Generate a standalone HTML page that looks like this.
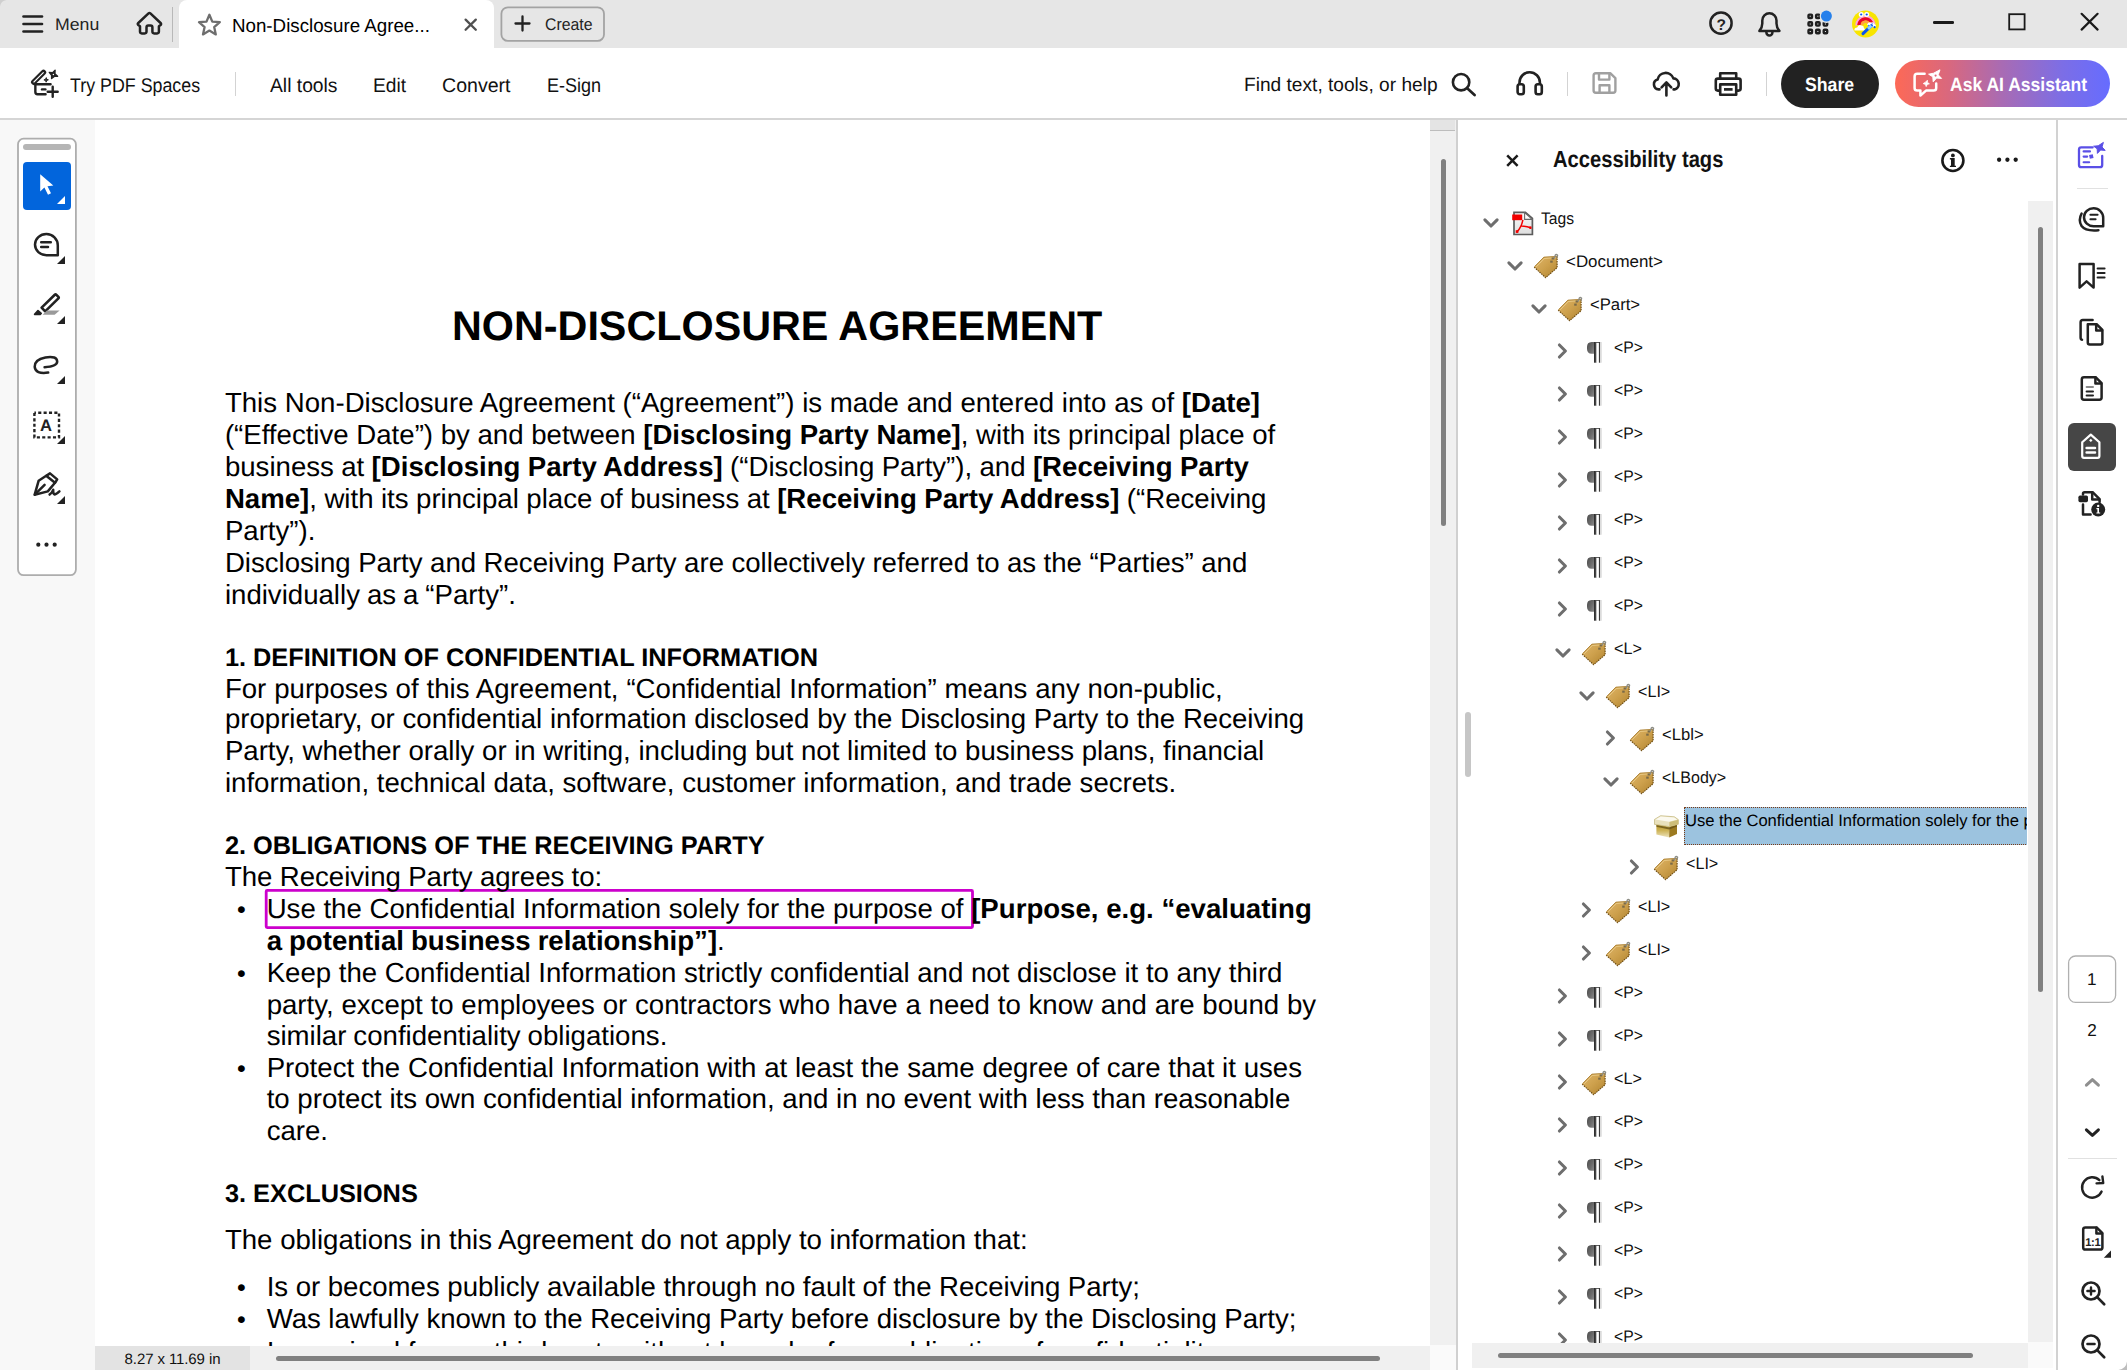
<!DOCTYPE html>
<html lang="en"><head><meta charset="utf-8"><title>Non-Disclosure Agreement</title>
<style>
html,body{margin:0;padding:0}
body{width:2127px;height:1370px;position:relative;overflow:hidden;background:#fff;font-family:'Liberation Sans',sans-serif}
.t{position:absolute;white-space:pre;font-family:'Liberation Sans',sans-serif;text-rendering:geometricPrecision}
.a{position:absolute}
svg{position:absolute;overflow:visible}

</style></head>
<body>
<div class="a" style="left:0;top:0;width:2127px;height:48px;background:#e6e6e6"></div><div class="a" style="left:0;top:48px;width:2127px;height:70px;background:#fff"></div><div class="a" style="left:0;top:118px;width:2127px;height:2px;background:#d5d5d5"></div><div class="a" style="left:0;top:120px;width:95px;height:1250px;background:#f8f8f8"></div><div class="a" style="left:1430px;top:120px;width:26px;height:1225px;background:#f0f0f0"></div><div class="a" style="left:1430px;top:120px;width:25px;height:10px;background:#e4e4e4;border-bottom:1px solid #bdbdbd"></div><div class="a" style="left:1441px;top:158.5px;width:5.2px;height:367px;background:#808080;border-radius:3px"></div><div class="a" style="left:1456px;top:120px;width:2px;height:1250px;background:#d0d0d0"></div><svg style="left:0;top:0" width="2127" height="1370"><rect x="266.2" y="890.4" width="706.3" height="37.2" fill="none" stroke="#cc00cc" stroke-width="2.8" rx="1"/></svg><svg style="left:22px;top:14px" width="24" height="20" viewBox="0 0 24 20" ><g stroke="#222" stroke-width="2.6" stroke-linecap="round"><line x1="1.5" y1="2.5" x2="20" y2="2.5"/><line x1="1.5" y1="10" x2="20" y2="10"/><line x1="1.5" y1="17.5" x2="20" y2="17.5"/></g></svg><svg style="left:136px;top:11px" width="28" height="26" viewBox="0 0 28 26" ><path d="M4 15.2 V20.6 Q4 22.4 5.8 22.4 H8.7 Q10.5 22.4 10.5 20.6 V16.4 Q10.5 14.6 12.3 14.6 H14.6 Q16.4 14.6 16.4 16.4 V20.6 Q16.4 22.4 18.2 22.4 H21.1 Q22.9 22.4 22.9 20.6 V15.2 L24.6 14 Q25.6 13 24.6 12 L14.4 2.4 Q13.45 1.6 12.5 2.4 L2.3 12 Q1.3 13 2.3 14 Z" fill="none" stroke="#222" stroke-width="2.5" stroke-linejoin="round"/></svg><div class="a" style="left:172px;top:7px;width:1px;height:35px;background:#b8b8b8"></div><div class="a" style="left:179px;top:0;width:315px;height:48px;background:#fff;border-radius:8px 8px 0 0"></div><svg style="left:196px;top:12px" width="27" height="27" viewBox="0 0 27 27" ><path d="M13.4 2.7 L16.3 9.6 L23.8 10.2 L18.2 15.1 L19.8 22.4 L13.4 18.6 L7.0 22.4 L8.6 15.1 L3.0 10.2 L10.5 9.6 Z" fill="none" stroke="#6e6e6e" stroke-width="2.3" stroke-linejoin="round"/></svg><svg style="left:463px;top:17px" width="16" height="16" viewBox="0 0 16 16" ><path d="M2.6 2.6 L12.8 12.8 M12.8 2.6 L2.6 12.8" stroke="#505050" stroke-width="2.3" stroke-linecap="round"/></svg><svg style="left:498px;top:4px" width="110" height="40" viewBox="0 0 110 40" ><rect x="3.4" y="3.3" width="102.6" height="33.6" rx="6.5" fill="#e6e6e6" stroke="#a3a3a3" stroke-width="1.8"/></svg><svg style="left:514px;top:15px" width="18" height="18" viewBox="0 0 18 18" ><path d="M8.5 1.5 V15.5 M1.5 8.5 H15.5" stroke="#222" stroke-width="2.3" stroke-linecap="round"/></svg><svg style="left:28px;top:66px" width="34" height="34" viewBox="0 0 34 34" ><g fill="none" stroke="#222" stroke-linecap="round" stroke-linejoin="round">
<path d="M5.7 16.2 L15.5 6.4" stroke-width="5.4"/><path d="M5.9 16 L15.3 6.6" stroke="#fff" stroke-width="1.1"/>
<path d="M6.6 18.3 H22.6 M7.35 18.6 V26.1 Q7.35 28.3 9.55 28.3 H17.6" stroke-width="2.4"/>
<path d="M14 23.4 H17.4" stroke-width="2.4"/>
<path d="M24.7 20.7 V30.7 M19.7 25.7 H29.7" stroke-width="2.4"/>
</g>
<path d="M27.1 4.3 L26.9 7.8 L29.6 10.2 L26.3 10.4 L23.6 12.5 L23.6 9.2 L21.3 6.4 L24.6 6.7 Z" fill="#222" stroke="#222" stroke-width="1.4" stroke-linejoin="round"/><circle cx="25.4" cy="8.5" r="0.75" fill="#fff"/>
<path d="M18.3 11.6 L18.7 13.2 L20.4 13.8 L18.8 14.5 L18.1 16.2 L17.6 14.5 L15.9 13.9 L17.5 13.2 Z" fill="#222" stroke="#222" stroke-width="0.9" stroke-linejoin="round"/></svg><div class="a" style="left:235px;top:72px;width:1px;height:24px;background:#d3d3d3"></div><svg style="left:1449px;top:69.3px" width="30" height="30" viewBox="0 0 30 30" ><circle cx="12.1" cy="13.2" r="8.2" fill="none" stroke="#222" stroke-width="2.6"/><path d="M18.2 19.3 L25.6 26" stroke="#222" stroke-width="2.7" stroke-linecap="round"/></svg><svg style="left:1514px;top:70px" width="32" height="30" viewBox="0 0 32 30" ><g fill="none" stroke="#222" stroke-width="2.6" stroke-linejoin="round"><path d="M5.5 14.5 V12.5 A10.2 10.2 0 0 1 25.9 12.5 V14.5"/><rect x="3.6" y="14.2" width="6.2" height="10" rx="2.2"/><rect x="21.6" y="14.2" width="6.2" height="10" rx="2.2"/></g></svg><div class="a" style="left:1567px;top:72px;width:1px;height:24px;background:#d3d3d3"></div><svg style="left:1590px;top:70px" width="30" height="28" viewBox="0 0 30 28" ><g fill="none" stroke="#a0a0a0" stroke-width="2.4" stroke-linejoin="round"><path d="M3.6 5.4 Q3.6 3.2 5.8 3.2 H20.2 L25.4 8.2 V20.6 Q25.4 22.8 23.2 22.8 H5.8 Q3.6 22.8 3.6 20.6 Z"/><path d="M9 3.4 V9.6 H19.4 V3.4"/><path d="M9.6 22.6 V15.2 H19.4 V22.6"/></g></svg><svg style="left:1650px;top:69px" width="34" height="30" viewBox="0 0 34 30" ><g fill="none" stroke="#222" stroke-width="2.6" stroke-linecap="round" stroke-linejoin="round"><path d="M9.5 20.4 H8.6 A5 5 0 0 1 7.6 10.6 A8.2 8.2 0 0 1 23.4 9.4 A5.6 5.6 0 0 1 24.6 20.4 H23.6"/><path d="M16.4 26.4 V13.8 M11.6 18.4 L16.4 13.4 L21.2 18.4"/></g></svg><svg style="left:1712px;top:69px" width="34" height="30" viewBox="0 0 34 30" ><g fill="none" stroke="#222" stroke-width="2.6" stroke-linejoin="round"><path d="M8.2 9.6 V4.2 H24.2 V9.6"/><path d="M8.2 21.6 H5.8 Q3.8 21.6 3.8 19.6 V11.6 Q3.8 9.6 5.8 9.6 H26.6 Q28.6 9.6 28.6 11.6 V19.6 Q28.6 21.6 26.6 21.6 H24.2"/><rect x="8.2" y="15.4" width="16" height="10.4"/><path d="M12 20.4 H20.6" stroke-width="2.7"/></g></svg><div class="a" style="left:1766px;top:72px;width:1px;height:24px;background:#d3d3d3"></div><div class="a" style="left:1781px;top:60px;width:98px;height:48px;border-radius:24px;background:#222"></div><div class="a" style="left:1895px;top:60px;width:215px;height:47px;border-radius:24px;background:linear-gradient(90deg,#fd6956 0%,#d9687e 25%,#a86bb4 50%,#7c6ee6 78%,#666cff 100%)"></div><svg style="left:1910px;top:68px" width="34" height="34" viewBox="0 0 34 34" ><g fill="none" stroke="#fff" stroke-width="2.5" stroke-linejoin="round" stroke-linecap="round"><path d="M14.6 5.8 H7.2 Q4.6 5.8 4.6 8.4 V20 Q4.6 22.6 7.2 22.6 H10.4 V27.6 L16 22.6 H23.6 Q26.2 22.6 26.2 20 V15.4"/></g><path d="M30 1.8 L28.2 6.8 L31.6 10.4 L26.6 10 L23.2 13.8 L22.8 8.8 L18.6 6.2 L23.6 5.2 Z" fill="#fff" stroke="#fff" stroke-width="1" stroke-linejoin="round"/><circle cx="25.6" cy="7.6" r="1.1" fill="#e2687c"/><path d="M17.4 12.2 L17.4 14.4 L19.4 15.8 L17.2 16.4 L16.2 18.6 L15.4 16.4 L13.2 15.6 L15.2 14.4 Z" fill="#fff" stroke="#fff" stroke-width="0.8" stroke-linejoin="round"/></svg><svg style="left:1708px;top:10px" width="26" height="26" viewBox="0 0 26 26" ><circle cx="13" cy="13.2" r="10.6" fill="none" stroke="#222" stroke-width="2.5"/></svg><svg style="left:1755px;top:9px" width="30" height="30" viewBox="0 0 30 30" ><g fill="none" stroke="#222" stroke-width="2.5" stroke-linejoin="round" stroke-linecap="round"><path d="M4.4 21.9 Q7.3 18.6 7.3 14.6 V11.4 A7.1 7.1 0 0 1 21.5 11.4 V14.6 Q21.5 18.6 24.4 21.9 Z"/><path d="M11.4 22.4 V23.4 A3 3 0 0 0 17.4 23.4 V22.4"/></g></svg><svg style="left:1806px;top:12.5px" width="26" height="26" viewBox="0 0 26 26" ><rect x="2.5" y="1.6" width="3.5" height="3.4" rx="0.8" fill="none" stroke="#1f1f1f" stroke-width="2.4" stroke-linejoin="round"/><rect x="10.1" y="1.6" width="3.5" height="3.4" rx="0.8" fill="none" stroke="#1f1f1f" stroke-width="2.4" stroke-linejoin="round"/><rect x="17.7" y="1.6" width="3.5" height="3.4" rx="0.8" fill="none" stroke="#1f1f1f" stroke-width="2.4" stroke-linejoin="round"/><rect x="2.5" y="9.2" width="3.5" height="3.4" rx="0.8" fill="none" stroke="#1f1f1f" stroke-width="2.4" stroke-linejoin="round"/><rect x="10.1" y="9.2" width="3.5" height="3.4" rx="0.8" fill="none" stroke="#1f1f1f" stroke-width="2.4" stroke-linejoin="round"/><rect x="17.7" y="9.2" width="3.5" height="3.4" rx="0.8" fill="none" stroke="#1f1f1f" stroke-width="2.4" stroke-linejoin="round"/><rect x="2.5" y="16.8" width="3.5" height="3.4" rx="0.8" fill="none" stroke="#1f1f1f" stroke-width="2.4" stroke-linejoin="round"/><rect x="10.1" y="16.8" width="3.5" height="3.4" rx="0.8" fill="none" stroke="#1f1f1f" stroke-width="2.4" stroke-linejoin="round"/><rect x="17.7" y="16.8" width="3.5" height="3.4" rx="0.8" fill="none" stroke="#1f1f1f" stroke-width="2.4" stroke-linejoin="round"/><circle cx="20.4" cy="3.1" r="6.8" fill="#e6e6e6"/><circle cx="20.4" cy="3.1" r="5.5" fill="#2680eb"/></svg><svg style="left:1852px;top:9.5px" width="28" height="28" viewBox="0 0 28 28" ><circle cx="13.5" cy="13.9" r="13.5" fill="#f8e500"/><path d="M4.3 15.4 A9.2 9.2 0 0 1 22.6 14.2" fill="none" stroke="#ff9ee0" stroke-width="2"/><path d="M6.9 15.2 A6.6 6.6 0 0 1 20 14.4" fill="none" stroke="#e9002d" stroke-width="3.4"/><path d="M10 15.4 A3.5 3.5 0 0 1 17 15.2" fill="none" stroke="#ffa044" stroke-width="2.4"/><circle cx="9.2" cy="4.6" r="2.5" fill="#fff"/><circle cx="14.7" cy="4.6" r="2.5" fill="#fff"/><circle cx="9.2" cy="4.5" r="1.1" fill="#0a4df0"/><circle cx="14.7" cy="4.5" r="1.1" fill="#0a4df0"/><path d="M2.4 20.4 Q2.2 17.6 5.2 17.6 Q6.2 14 9.6 15.4 Q12 15.4 11.8 18 Q13.4 18.6 12.8 20.4 Z" fill="#fff"/><path d="M15 14.6 Q16.6 11.2 19.4 12.6 Q21.6 11.6 22.4 14 Q24.6 14.6 23.6 17.2 L17.6 17 Z" fill="#fff"/><path d="M11 23.6 L19.4 15.6" stroke="#0a55ee" stroke-width="3" stroke-linecap="round"/><path d="M16 18.8 L19.4 15.6" stroke="#8fd2ff" stroke-width="3" stroke-linecap="butt"/><circle cx="22.6" cy="17.2" r="1.1" fill="#0a55ee"/><circle cx="16.6" cy="15.4" r="0.7" fill="#3d7bff"/><circle cx="20.2" cy="13.4" r="0.7" fill="#7fa8ff"/></svg><div class="a" style="left:1933px;top:21px;width:21px;height:2.7px;background:#1a1a1a;border-radius:1.3px"></div><svg style="left:2004px;top:9px" width="26" height="26" viewBox="0 0 26 26" ><rect x="5.2" y="5.2" width="15.4" height="15.2" fill="none" stroke="#1a1a1a" stroke-width="1.8"/></svg><svg style="left:2080px;top:12px" width="20" height="20" viewBox="0 0 20 20" ><path d="M1.6 1.8 L17.6 17.6 M17.6 1.8 L1.6 17.6" stroke="#1a1a1a" stroke-width="2.2" stroke-linecap="round"/></svg><svg style="left:14px;top:134px" width="70" height="446" viewBox="0 0 70 446" ><rect x="4" y="4.7" width="57.9" height="436.5" rx="5.6" fill="#fff" stroke="#adadad" stroke-width="1.8"/></svg><div class="a" style="left:23px;top:144px;width:48px;height:6px;border-radius:3px;background:#b5b5b5"></div><div class="a" style="left:23px;top:162px;width:48px;height:48px;border-radius:4px;background:#0265dc"></div><svg style="left:36px;top:172px" width="20" height="26" viewBox="0 0 20 26" ><path d="M4.2 2.2 L4.2 19.4 L8.4 15.6 L12 22.8 L15 21.3 L11.5 14.3 L17.3 13.6 Z" fill="#fff"/></svg><svg style="left:57px;top:195.5px" width="8" height="8" viewBox="0 0 8 8" ><path d="M8 0 V8 H0 Z" fill="#fff"/></svg><svg style="left:30px;top:230px" width="34" height="34" viewBox="0 0 34 34" ><g fill="none" stroke="#222" stroke-width="2.5" stroke-linecap="round" stroke-linejoin="round"><path d="M16.4 4.2 A11.4 11.4 0 0 1 27.8 15.6 V25.4 H16.4 A11.4 10.6 0 0 1 16.4 4.2 Z" transform="translate(0,-0.2)"/><path d="M11.2 12.2 H20.8 M11.2 17 H18"/></g></svg><svg style="left:57px;top:255.5px" width="8" height="8" viewBox="0 0 8 8" ><path d="M8 0 V8 H0 Z" fill="#222"/></svg><svg style="left:30px;top:290px" width="34" height="34" viewBox="0 0 34 34" ><g stroke="#222" stroke-linejoin="round"><path d="M11.6 17.6 L24.8 4.8 Q25.6 4 26.4 4.8 L28.4 6.8 Q29.2 7.6 28.4 8.4 L15.2 21.4 Z" fill="none" stroke-width="2.6"/><path d="M4.6 24.4 L8 20.6 L11.2 23.4 L10.2 24.4 Z" fill="#222" stroke-width="1.6"/></g><path d="M17 20.4 H29.6 L24.6 24.8 H12.6 Z" fill="#9a9a9a"/></svg><svg style="left:57px;top:315.5px" width="8" height="8" viewBox="0 0 8 8" ><path d="M8 0 V8 H0 Z" fill="#222"/></svg><svg style="left:30px;top:350px" width="34" height="34" viewBox="0 0 34 34" ><path d="M18.2 22.6 Q5.4 24.4 4.7 16.8 Q4.4 9.4 15.4 7.4 Q27 5.6 27.2 11.6 Q27.2 16.6 14.6 17.2" fill="none" stroke="#222" stroke-width="2.5" stroke-linecap="round"/></svg><svg style="left:57px;top:376px" width="8" height="8" viewBox="0 0 8 8" ><path d="M8 0 V8 H0 Z" fill="#222"/></svg><svg style="left:30px;top:408px" width="34" height="34" viewBox="0 0 34 34" ><rect x="4.4" y="4.8" width="24.6" height="24.6" fill="none" stroke="#222" stroke-width="2.4" stroke-dasharray="3.1 2.27" stroke-dashoffset="1.55"/></svg><svg style="left:57px;top:436px" width="8" height="8" viewBox="0 0 8 8" ><path d="M8 0 V8 H0 Z" fill="#222"/></svg><svg style="left:30px;top:468px" width="34" height="34" viewBox="0 0 34 34" ><g fill="none" stroke="#222" stroke-width="2.5" stroke-linecap="round" stroke-linejoin="round"><path d="M16.6 7.6 L20 5.4 L27.2 11.4 L25.2 14.6"/><path d="M16.2 7.8 L8.6 12.8 L4.6 26.8 L17.8 23.4 L25 14.8 Z"/><path d="M5 26.4 L14.6 16.8"/><path d="M19.6 26.6 Q22.4 24.4 23.2 21.8 Q23 25.8 24.4 26.4 Q26.2 26.4 29.4 23.4"/></g></svg><svg style="left:57px;top:496px" width="8" height="8" viewBox="0 0 8 8" ><path d="M8 0 V8 H0 Z" fill="#222"/></svg><svg style="left:30px;top:535px" width="34" height="20" viewBox="0 0 34 20" ><circle cx="8.3" cy="9.7" r="2.1" fill="#222"/><circle cx="16.5" cy="9.7" r="2.1" fill="#222"/><circle cx="24.7" cy="9.7" r="2.1" fill="#222"/></svg><svg style="left:0;top:0" width="0" height="0"><linearGradient id="tg" x1="0" y1="0" x2="1" y2="1"><stop offset="0" stop-color="#e0b66a"/><stop offset="0.5" stop-color="#cda04c"/><stop offset="1" stop-color="#b0832f"/></linearGradient><linearGradient id="pg" x1="0" y1="0" x2="1" y2="0.6"><stop offset="0" stop-color="#4c4c4c"/><stop offset="0.6" stop-color="#6c6c6c"/><stop offset="1" stop-color="#8a8a8a"/></linearGradient><linearGradient id="pg2" x1="0" y1="0" x2="1" y2="0"><stop offset="0" stop-color="#262626"/><stop offset="1" stop-color="#5a5a5a"/></linearGradient><linearGradient id="bx" x1="0" y1="0" x2="0" y2="1"><stop offset="0" stop-color="#b9972e"/><stop offset="0.45" stop-color="#cdb254"/><stop offset="1" stop-color="#ece3bd"/></linearGradient></svg><div class="a" style="left:1465px;top:712px;width:5.5px;height:65px;border-radius:3px;background:#c6c6c6"></div><svg style="left:1504px;top:152px" width="18" height="18" viewBox="0 0 18 18" ><path d="M3.2 3.4 L13.6 13.8 M13.6 3.4 L3.2 13.8" stroke="#1a1a1a" stroke-width="2.5" stroke-linecap="butt"/></svg><svg style="left:1939px;top:147px" width="28" height="28" viewBox="0 0 28 28" ><circle cx="13.9" cy="13.5" r="10.5" fill="none" stroke="#1a1a1a" stroke-width="2.6"/><circle cx="13.9" cy="8.4" r="1.9" fill="#1a1a1a"/><path d="M10.9 11.1 H15.7 V18.7 H17 V20 H10.9 V18.7 H12 V12.5 H10.9 Z" fill="#1a1a1a"/></svg><svg style="left:1990px;top:150px" width="40" height="20" viewBox="0 0 40 20" ><circle cx="9.1" cy="9.75" r="2.15" fill="#1a1a1a"/><circle cx="17.4" cy="9.75" r="2.15" fill="#1a1a1a"/><circle cx="25.7" cy="9.75" r="2.15" fill="#1a1a1a"/></svg><div class="a" style="left:2028px;top:201px;width:25px;height:1141px;background:#f0f0f0"></div><div class="a" style="left:2037.6px;top:227px;width:5.4px;height:765px;background:#808080;border-radius:3px"></div><svg style="left:1481.8000000000002px;top:215.8px" width="18" height="14" viewBox="0 0 18 14" ><path d="M2.9 3.9 L9 10 L15.1 3.9" fill="none" stroke="#6e6e6e" stroke-width="3.1" stroke-linecap="round" stroke-linejoin="round"/></svg><svg style="left:1511.8px;top:210.70000000000002px" width="23" height="26" viewBox="0 0 23 26" ><linearGradient id="pf" x1="0" y1="0" x2="0" y2="1"><stop offset="0" stop-color="#fafafa"/><stop offset="1" stop-color="#dedede"/></linearGradient><path d="M2 1.3 H13.4 L20.4 7.4 V23.5 H2 Z" fill="url(#pf)" stroke="#5c5c5c" stroke-width="1.7" stroke-linejoin="miter"/><path d="M12.6 1.6 V8.4 H20.2 Z" fill="#fdfdfd" stroke="#6a6a6a" stroke-width="1.1" stroke-linejoin="round"/><rect x="0.2" y="3.5" width="10" height="5.7" fill="#f20000"/><path d="M5.2 20.6 Q9.2 16.6 10.8 9.4 M9.6 15 Q13.6 15 18.6 16.8" fill="none" stroke="#f20000" stroke-width="1.5" stroke-linecap="round"/><rect x="3.7" y="19.2" width="2.7" height="2.7" fill="#f20000"/><rect x="17.4" y="15.4" width="2" height="2.6" fill="#f20000"/></svg><svg style="left:1505.8000000000002px;top:258.79999999999995px" width="18" height="14" viewBox="0 0 18 14" ><path d="M2.9 3.9 L9 10 L15.1 3.9" fill="none" stroke="#6e6e6e" stroke-width="3.1" stroke-linecap="round" stroke-linejoin="round"/></svg><svg style="left:1532.8px;top:252.89999999999998px" width="27" height="27" viewBox="0 0 27 27" ><path d="M1.2 14.1 L10.7 4 L24.1 3.3 V14.7 L12.6 24.7 Z" fill="url(#tg)"/><path d="M1.2 14.1 L12.6 24.7 L24.1 14.7 V3.3" fill="none" stroke="#6f4d12" stroke-width="1.15" stroke-dasharray="1.5 0.9" stroke-linejoin="round"/><path d="M1.6 13.6 L10.9 4.2 L23.6 3.5" fill="none" stroke="#a67a2c" stroke-width="0.9"/><path d="M3.2 13.8 L11.3 5.4 L22.6 4.7" fill="none" stroke="#f1d596" stroke-width="0.9" opacity="0.85"/><rect x="18.6" y="4.4" width="2.5" height="2.1" fill="#7a6a48"/><rect x="17.2" y="7.6" width="2.5" height="2.1" fill="#7a6a48"/><path d="M21.2 5.6 L22.2 2.2 Q23.2 0.8 24.6 2.2 L24 4.6" fill="none" stroke="#8c8c84" stroke-width="1.3"/></svg><svg style="left:1529.8000000000002px;top:301.79999999999995px" width="18" height="14" viewBox="0 0 18 14" ><path d="M2.9 3.9 L9 10 L15.1 3.9" fill="none" stroke="#6e6e6e" stroke-width="3.1" stroke-linecap="round" stroke-linejoin="round"/></svg><svg style="left:1556.8px;top:295.9px" width="27" height="27" viewBox="0 0 27 27" ><path d="M1.2 14.1 L10.7 4 L24.1 3.3 V14.7 L12.6 24.7 Z" fill="url(#tg)"/><path d="M1.2 14.1 L12.6 24.7 L24.1 14.7 V3.3" fill="none" stroke="#6f4d12" stroke-width="1.15" stroke-dasharray="1.5 0.9" stroke-linejoin="round"/><path d="M1.6 13.6 L10.9 4.2 L23.6 3.5" fill="none" stroke="#a67a2c" stroke-width="0.9"/><path d="M3.2 13.8 L11.3 5.4 L22.6 4.7" fill="none" stroke="#f1d596" stroke-width="0.9" opacity="0.85"/><rect x="18.6" y="4.4" width="2.5" height="2.1" fill="#7a6a48"/><rect x="17.2" y="7.6" width="2.5" height="2.1" fill="#7a6a48"/><path d="M21.2 5.6 L22.2 2.2 Q23.2 0.8 24.6 2.2 L24 4.6" fill="none" stroke="#8c8c84" stroke-width="1.3"/></svg><svg style="left:1555.8000000000002px;top:341.9px" width="13" height="18" viewBox="0 0 13 18" ><path d="M3.4 3 L9.4 9 L3.4 15" fill="none" stroke="#6e6e6e" stroke-width="3.1" stroke-linecap="round" stroke-linejoin="round"/></svg><svg style="left:1587.0px;top:342.2px" width="16" height="22" viewBox="0 0 16 22" ><path d="M9 0 H4.6 Q0 0.2 0 5 V7 Q0.2 11.8 4.6 11.8 H9 Z" fill="url(#pg)"/><rect x="7" y="0" width="6.2" height="0.9" fill="#3a3a3a"/><rect x="7" y="0" width="2.6" height="20.7" fill="url(#pg2)"/><rect x="9.6" y="0.9" width="2.3" height="19.8" fill="#fff"/><rect x="11.9" y="0" width="1.3" height="20.7" fill="#3a3a3a"/><rect x="13.2" y="0" width="1.6" height="20.7" fill="#dedede"/></svg><svg style="left:1555.8000000000002px;top:384.9px" width="13" height="18" viewBox="0 0 13 18" ><path d="M3.4 3 L9.4 9 L3.4 15" fill="none" stroke="#6e6e6e" stroke-width="3.1" stroke-linecap="round" stroke-linejoin="round"/></svg><svg style="left:1587.0px;top:385.2px" width="16" height="22" viewBox="0 0 16 22" ><path d="M9 0 H4.6 Q0 0.2 0 5 V7 Q0.2 11.8 4.6 11.8 H9 Z" fill="url(#pg)"/><rect x="7" y="0" width="6.2" height="0.9" fill="#3a3a3a"/><rect x="7" y="0" width="2.6" height="20.7" fill="url(#pg2)"/><rect x="9.6" y="0.9" width="2.3" height="19.8" fill="#fff"/><rect x="11.9" y="0" width="1.3" height="20.7" fill="#3a3a3a"/><rect x="13.2" y="0" width="1.6" height="20.7" fill="#dedede"/></svg><svg style="left:1555.8000000000002px;top:427.9px" width="13" height="18" viewBox="0 0 13 18" ><path d="M3.4 3 L9.4 9 L3.4 15" fill="none" stroke="#6e6e6e" stroke-width="3.1" stroke-linecap="round" stroke-linejoin="round"/></svg><svg style="left:1587.0px;top:428.2px" width="16" height="22" viewBox="0 0 16 22" ><path d="M9 0 H4.6 Q0 0.2 0 5 V7 Q0.2 11.8 4.6 11.8 H9 Z" fill="url(#pg)"/><rect x="7" y="0" width="6.2" height="0.9" fill="#3a3a3a"/><rect x="7" y="0" width="2.6" height="20.7" fill="url(#pg2)"/><rect x="9.6" y="0.9" width="2.3" height="19.8" fill="#fff"/><rect x="11.9" y="0" width="1.3" height="20.7" fill="#3a3a3a"/><rect x="13.2" y="0" width="1.6" height="20.7" fill="#dedede"/></svg><svg style="left:1555.8000000000002px;top:470.9px" width="13" height="18" viewBox="0 0 13 18" ><path d="M3.4 3 L9.4 9 L3.4 15" fill="none" stroke="#6e6e6e" stroke-width="3.1" stroke-linecap="round" stroke-linejoin="round"/></svg><svg style="left:1587.0px;top:471.2px" width="16" height="22" viewBox="0 0 16 22" ><path d="M9 0 H4.6 Q0 0.2 0 5 V7 Q0.2 11.8 4.6 11.8 H9 Z" fill="url(#pg)"/><rect x="7" y="0" width="6.2" height="0.9" fill="#3a3a3a"/><rect x="7" y="0" width="2.6" height="20.7" fill="url(#pg2)"/><rect x="9.6" y="0.9" width="2.3" height="19.8" fill="#fff"/><rect x="11.9" y="0" width="1.3" height="20.7" fill="#3a3a3a"/><rect x="13.2" y="0" width="1.6" height="20.7" fill="#dedede"/></svg><svg style="left:1555.8000000000002px;top:513.9px" width="13" height="18" viewBox="0 0 13 18" ><path d="M3.4 3 L9.4 9 L3.4 15" fill="none" stroke="#6e6e6e" stroke-width="3.1" stroke-linecap="round" stroke-linejoin="round"/></svg><svg style="left:1587.0px;top:514.1999999999999px" width="16" height="22" viewBox="0 0 16 22" ><path d="M9 0 H4.6 Q0 0.2 0 5 V7 Q0.2 11.8 4.6 11.8 H9 Z" fill="url(#pg)"/><rect x="7" y="0" width="6.2" height="0.9" fill="#3a3a3a"/><rect x="7" y="0" width="2.6" height="20.7" fill="url(#pg2)"/><rect x="9.6" y="0.9" width="2.3" height="19.8" fill="#fff"/><rect x="11.9" y="0" width="1.3" height="20.7" fill="#3a3a3a"/><rect x="13.2" y="0" width="1.6" height="20.7" fill="#dedede"/></svg><svg style="left:1555.8000000000002px;top:556.9px" width="13" height="18" viewBox="0 0 13 18" ><path d="M3.4 3 L9.4 9 L3.4 15" fill="none" stroke="#6e6e6e" stroke-width="3.1" stroke-linecap="round" stroke-linejoin="round"/></svg><svg style="left:1587.0px;top:557.1999999999999px" width="16" height="22" viewBox="0 0 16 22" ><path d="M9 0 H4.6 Q0 0.2 0 5 V7 Q0.2 11.8 4.6 11.8 H9 Z" fill="url(#pg)"/><rect x="7" y="0" width="6.2" height="0.9" fill="#3a3a3a"/><rect x="7" y="0" width="2.6" height="20.7" fill="url(#pg2)"/><rect x="9.6" y="0.9" width="2.3" height="19.8" fill="#fff"/><rect x="11.9" y="0" width="1.3" height="20.7" fill="#3a3a3a"/><rect x="13.2" y="0" width="1.6" height="20.7" fill="#dedede"/></svg><svg style="left:1555.8000000000002px;top:599.9px" width="13" height="18" viewBox="0 0 13 18" ><path d="M3.4 3 L9.4 9 L3.4 15" fill="none" stroke="#6e6e6e" stroke-width="3.1" stroke-linecap="round" stroke-linejoin="round"/></svg><svg style="left:1587.0px;top:600.1999999999999px" width="16" height="22" viewBox="0 0 16 22" ><path d="M9 0 H4.6 Q0 0.2 0 5 V7 Q0.2 11.8 4.6 11.8 H9 Z" fill="url(#pg)"/><rect x="7" y="0" width="6.2" height="0.9" fill="#3a3a3a"/><rect x="7" y="0" width="2.6" height="20.7" fill="url(#pg2)"/><rect x="9.6" y="0.9" width="2.3" height="19.8" fill="#fff"/><rect x="11.9" y="0" width="1.3" height="20.7" fill="#3a3a3a"/><rect x="13.2" y="0" width="1.6" height="20.7" fill="#dedede"/></svg><svg style="left:1553.8000000000002px;top:645.8px" width="18" height="14" viewBox="0 0 18 14" ><path d="M2.9 3.9 L9 10 L15.1 3.9" fill="none" stroke="#6e6e6e" stroke-width="3.1" stroke-linecap="round" stroke-linejoin="round"/></svg><svg style="left:1580.8px;top:639.9px" width="27" height="27" viewBox="0 0 27 27" ><path d="M1.2 14.1 L10.7 4 L24.1 3.3 V14.7 L12.6 24.7 Z" fill="url(#tg)"/><path d="M1.2 14.1 L12.6 24.7 L24.1 14.7 V3.3" fill="none" stroke="#6f4d12" stroke-width="1.15" stroke-dasharray="1.5 0.9" stroke-linejoin="round"/><path d="M1.6 13.6 L10.9 4.2 L23.6 3.5" fill="none" stroke="#a67a2c" stroke-width="0.9"/><path d="M3.2 13.8 L11.3 5.4 L22.6 4.7" fill="none" stroke="#f1d596" stroke-width="0.9" opacity="0.85"/><rect x="18.6" y="4.4" width="2.5" height="2.1" fill="#7a6a48"/><rect x="17.2" y="7.6" width="2.5" height="2.1" fill="#7a6a48"/><path d="M21.2 5.6 L22.2 2.2 Q23.2 0.8 24.6 2.2 L24 4.6" fill="none" stroke="#8c8c84" stroke-width="1.3"/></svg><svg style="left:1577.8000000000002px;top:688.8px" width="18" height="14" viewBox="0 0 18 14" ><path d="M2.9 3.9 L9 10 L15.1 3.9" fill="none" stroke="#6e6e6e" stroke-width="3.1" stroke-linecap="round" stroke-linejoin="round"/></svg><svg style="left:1604.8px;top:682.9px" width="27" height="27" viewBox="0 0 27 27" ><path d="M1.2 14.1 L10.7 4 L24.1 3.3 V14.7 L12.6 24.7 Z" fill="url(#tg)"/><path d="M1.2 14.1 L12.6 24.7 L24.1 14.7 V3.3" fill="none" stroke="#6f4d12" stroke-width="1.15" stroke-dasharray="1.5 0.9" stroke-linejoin="round"/><path d="M1.6 13.6 L10.9 4.2 L23.6 3.5" fill="none" stroke="#a67a2c" stroke-width="0.9"/><path d="M3.2 13.8 L11.3 5.4 L22.6 4.7" fill="none" stroke="#f1d596" stroke-width="0.9" opacity="0.85"/><rect x="18.6" y="4.4" width="2.5" height="2.1" fill="#7a6a48"/><rect x="17.2" y="7.6" width="2.5" height="2.1" fill="#7a6a48"/><path d="M21.2 5.6 L22.2 2.2 Q23.2 0.8 24.6 2.2 L24 4.6" fill="none" stroke="#8c8c84" stroke-width="1.3"/></svg><svg style="left:1603.8000000000002px;top:728.9px" width="13" height="18" viewBox="0 0 13 18" ><path d="M3.4 3 L9.4 9 L3.4 15" fill="none" stroke="#6e6e6e" stroke-width="3.1" stroke-linecap="round" stroke-linejoin="round"/></svg><svg style="left:1628.8px;top:725.9px" width="27" height="27" viewBox="0 0 27 27" ><path d="M1.2 14.1 L10.7 4 L24.1 3.3 V14.7 L12.6 24.7 Z" fill="url(#tg)"/><path d="M1.2 14.1 L12.6 24.7 L24.1 14.7 V3.3" fill="none" stroke="#6f4d12" stroke-width="1.15" stroke-dasharray="1.5 0.9" stroke-linejoin="round"/><path d="M1.6 13.6 L10.9 4.2 L23.6 3.5" fill="none" stroke="#a67a2c" stroke-width="0.9"/><path d="M3.2 13.8 L11.3 5.4 L22.6 4.7" fill="none" stroke="#f1d596" stroke-width="0.9" opacity="0.85"/><rect x="18.6" y="4.4" width="2.5" height="2.1" fill="#7a6a48"/><rect x="17.2" y="7.6" width="2.5" height="2.1" fill="#7a6a48"/><path d="M21.2 5.6 L22.2 2.2 Q23.2 0.8 24.6 2.2 L24 4.6" fill="none" stroke="#8c8c84" stroke-width="1.3"/></svg><svg style="left:1601.8000000000002px;top:774.8px" width="18" height="14" viewBox="0 0 18 14" ><path d="M2.9 3.9 L9 10 L15.1 3.9" fill="none" stroke="#6e6e6e" stroke-width="3.1" stroke-linecap="round" stroke-linejoin="round"/></svg><svg style="left:1628.8px;top:768.9px" width="27" height="27" viewBox="0 0 27 27" ><path d="M1.2 14.1 L10.7 4 L24.1 3.3 V14.7 L12.6 24.7 Z" fill="url(#tg)"/><path d="M1.2 14.1 L12.6 24.7 L24.1 14.7 V3.3" fill="none" stroke="#6f4d12" stroke-width="1.15" stroke-dasharray="1.5 0.9" stroke-linejoin="round"/><path d="M1.6 13.6 L10.9 4.2 L23.6 3.5" fill="none" stroke="#a67a2c" stroke-width="0.9"/><path d="M3.2 13.8 L11.3 5.4 L22.6 4.7" fill="none" stroke="#f1d596" stroke-width="0.9" opacity="0.85"/><rect x="18.6" y="4.4" width="2.5" height="2.1" fill="#7a6a48"/><rect x="17.2" y="7.6" width="2.5" height="2.1" fill="#7a6a48"/><path d="M21.2 5.6 L22.2 2.2 Q23.2 0.8 24.6 2.2 L24 4.6" fill="none" stroke="#8c8c84" stroke-width="1.3"/></svg><svg style="left:1653.8999999999999px;top:814.5px" width="25" height="23" viewBox="0 0 25 23" ><path d="M2.4 9.6 L15.2 11.8 V22.4 L2.4 19.6 Z" fill="url(#bx)"/><path d="M15.2 11.8 L23 9.6 V19 L15.2 22.4 Z" fill="#9c7a20"/><path d="M2.4 10 L15.2 12.6 L23 10 V11.6 L15.2 14.4 L2.4 11.8 Z" fill="#5e4a12" opacity="0.7"/><path d="M0.5 4.4 L6.6 0.7 L20.4 1.8 L24.3 4.6 V9.2 L15.4 11.6 L0.5 9.4 Z" fill="#e9e1bd" stroke="#b9a964" stroke-width="0.6"/><path d="M1.4 4.6 L6.8 1.4 L20 2.4 L23.2 4.6 L15.2 6.8 Z" fill="#fbf9ef"/><path d="M15.4 7 L24.3 4.8 V9.2 L15.4 11.6 Z" fill="#cdbd78"/></svg><div class="a" style="left:1684px;top:800px;width:343px;height:50px;overflow:hidden"><div class="a" style="left:0;top:7px;width:400px;height:38.4px;background:#9cc3df;outline:1px dotted #7a3b16;outline-offset:-1px"></div></div><div class="a" style="left:1684px;top:800px;width:343px;height:50px;overflow:hidden"><div class="t" style="left:1px;top:11px;font-size:16.6px;line-height:19px;color:#000;letter-spacing:-0.04px">Use the Confidential Information solely for the purpose of </div></div><svg style="left:1627.8000000000002px;top:857.9px" width="13" height="18" viewBox="0 0 13 18" ><path d="M3.4 3 L9.4 9 L3.4 15" fill="none" stroke="#6e6e6e" stroke-width="3.1" stroke-linecap="round" stroke-linejoin="round"/></svg><svg style="left:1652.8px;top:854.9px" width="27" height="27" viewBox="0 0 27 27" ><path d="M1.2 14.1 L10.7 4 L24.1 3.3 V14.7 L12.6 24.7 Z" fill="url(#tg)"/><path d="M1.2 14.1 L12.6 24.7 L24.1 14.7 V3.3" fill="none" stroke="#6f4d12" stroke-width="1.15" stroke-dasharray="1.5 0.9" stroke-linejoin="round"/><path d="M1.6 13.6 L10.9 4.2 L23.6 3.5" fill="none" stroke="#a67a2c" stroke-width="0.9"/><path d="M3.2 13.8 L11.3 5.4 L22.6 4.7" fill="none" stroke="#f1d596" stroke-width="0.9" opacity="0.85"/><rect x="18.6" y="4.4" width="2.5" height="2.1" fill="#7a6a48"/><rect x="17.2" y="7.6" width="2.5" height="2.1" fill="#7a6a48"/><path d="M21.2 5.6 L22.2 2.2 Q23.2 0.8 24.6 2.2 L24 4.6" fill="none" stroke="#8c8c84" stroke-width="1.3"/></svg><svg style="left:1579.8000000000002px;top:900.9px" width="13" height="18" viewBox="0 0 13 18" ><path d="M3.4 3 L9.4 9 L3.4 15" fill="none" stroke="#6e6e6e" stroke-width="3.1" stroke-linecap="round" stroke-linejoin="round"/></svg><svg style="left:1604.8px;top:897.9px" width="27" height="27" viewBox="0 0 27 27" ><path d="M1.2 14.1 L10.7 4 L24.1 3.3 V14.7 L12.6 24.7 Z" fill="url(#tg)"/><path d="M1.2 14.1 L12.6 24.7 L24.1 14.7 V3.3" fill="none" stroke="#6f4d12" stroke-width="1.15" stroke-dasharray="1.5 0.9" stroke-linejoin="round"/><path d="M1.6 13.6 L10.9 4.2 L23.6 3.5" fill="none" stroke="#a67a2c" stroke-width="0.9"/><path d="M3.2 13.8 L11.3 5.4 L22.6 4.7" fill="none" stroke="#f1d596" stroke-width="0.9" opacity="0.85"/><rect x="18.6" y="4.4" width="2.5" height="2.1" fill="#7a6a48"/><rect x="17.2" y="7.6" width="2.5" height="2.1" fill="#7a6a48"/><path d="M21.2 5.6 L22.2 2.2 Q23.2 0.8 24.6 2.2 L24 4.6" fill="none" stroke="#8c8c84" stroke-width="1.3"/></svg><svg style="left:1579.8000000000002px;top:943.9px" width="13" height="18" viewBox="0 0 13 18" ><path d="M3.4 3 L9.4 9 L3.4 15" fill="none" stroke="#6e6e6e" stroke-width="3.1" stroke-linecap="round" stroke-linejoin="round"/></svg><svg style="left:1604.8px;top:940.9px" width="27" height="27" viewBox="0 0 27 27" ><path d="M1.2 14.1 L10.7 4 L24.1 3.3 V14.7 L12.6 24.7 Z" fill="url(#tg)"/><path d="M1.2 14.1 L12.6 24.7 L24.1 14.7 V3.3" fill="none" stroke="#6f4d12" stroke-width="1.15" stroke-dasharray="1.5 0.9" stroke-linejoin="round"/><path d="M1.6 13.6 L10.9 4.2 L23.6 3.5" fill="none" stroke="#a67a2c" stroke-width="0.9"/><path d="M3.2 13.8 L11.3 5.4 L22.6 4.7" fill="none" stroke="#f1d596" stroke-width="0.9" opacity="0.85"/><rect x="18.6" y="4.4" width="2.5" height="2.1" fill="#7a6a48"/><rect x="17.2" y="7.6" width="2.5" height="2.1" fill="#7a6a48"/><path d="M21.2 5.6 L22.2 2.2 Q23.2 0.8 24.6 2.2 L24 4.6" fill="none" stroke="#8c8c84" stroke-width="1.3"/></svg><svg style="left:1555.8000000000002px;top:986.9px" width="13" height="18" viewBox="0 0 13 18" ><path d="M3.4 3 L9.4 9 L3.4 15" fill="none" stroke="#6e6e6e" stroke-width="3.1" stroke-linecap="round" stroke-linejoin="round"/></svg><svg style="left:1587.0px;top:987.1999999999999px" width="16" height="22" viewBox="0 0 16 22" ><path d="M9 0 H4.6 Q0 0.2 0 5 V7 Q0.2 11.8 4.6 11.8 H9 Z" fill="url(#pg)"/><rect x="7" y="0" width="6.2" height="0.9" fill="#3a3a3a"/><rect x="7" y="0" width="2.6" height="20.7" fill="url(#pg2)"/><rect x="9.6" y="0.9" width="2.3" height="19.8" fill="#fff"/><rect x="11.9" y="0" width="1.3" height="20.7" fill="#3a3a3a"/><rect x="13.2" y="0" width="1.6" height="20.7" fill="#dedede"/></svg><svg style="left:1555.8000000000002px;top:1029.9px" width="13" height="18" viewBox="0 0 13 18" ><path d="M3.4 3 L9.4 9 L3.4 15" fill="none" stroke="#6e6e6e" stroke-width="3.1" stroke-linecap="round" stroke-linejoin="round"/></svg><svg style="left:1587.0px;top:1030.2px" width="16" height="22" viewBox="0 0 16 22" ><path d="M9 0 H4.6 Q0 0.2 0 5 V7 Q0.2 11.8 4.6 11.8 H9 Z" fill="url(#pg)"/><rect x="7" y="0" width="6.2" height="0.9" fill="#3a3a3a"/><rect x="7" y="0" width="2.6" height="20.7" fill="url(#pg2)"/><rect x="9.6" y="0.9" width="2.3" height="19.8" fill="#fff"/><rect x="11.9" y="0" width="1.3" height="20.7" fill="#3a3a3a"/><rect x="13.2" y="0" width="1.6" height="20.7" fill="#dedede"/></svg><svg style="left:1555.8000000000002px;top:1072.9px" width="13" height="18" viewBox="0 0 13 18" ><path d="M3.4 3 L9.4 9 L3.4 15" fill="none" stroke="#6e6e6e" stroke-width="3.1" stroke-linecap="round" stroke-linejoin="round"/></svg><svg style="left:1580.8px;top:1069.9px" width="27" height="27" viewBox="0 0 27 27" ><path d="M1.2 14.1 L10.7 4 L24.1 3.3 V14.7 L12.6 24.7 Z" fill="url(#tg)"/><path d="M1.2 14.1 L12.6 24.7 L24.1 14.7 V3.3" fill="none" stroke="#6f4d12" stroke-width="1.15" stroke-dasharray="1.5 0.9" stroke-linejoin="round"/><path d="M1.6 13.6 L10.9 4.2 L23.6 3.5" fill="none" stroke="#a67a2c" stroke-width="0.9"/><path d="M3.2 13.8 L11.3 5.4 L22.6 4.7" fill="none" stroke="#f1d596" stroke-width="0.9" opacity="0.85"/><rect x="18.6" y="4.4" width="2.5" height="2.1" fill="#7a6a48"/><rect x="17.2" y="7.6" width="2.5" height="2.1" fill="#7a6a48"/><path d="M21.2 5.6 L22.2 2.2 Q23.2 0.8 24.6 2.2 L24 4.6" fill="none" stroke="#8c8c84" stroke-width="1.3"/></svg><svg style="left:1555.8000000000002px;top:1115.9px" width="13" height="18" viewBox="0 0 13 18" ><path d="M3.4 3 L9.4 9 L3.4 15" fill="none" stroke="#6e6e6e" stroke-width="3.1" stroke-linecap="round" stroke-linejoin="round"/></svg><svg style="left:1587.0px;top:1116.2px" width="16" height="22" viewBox="0 0 16 22" ><path d="M9 0 H4.6 Q0 0.2 0 5 V7 Q0.2 11.8 4.6 11.8 H9 Z" fill="url(#pg)"/><rect x="7" y="0" width="6.2" height="0.9" fill="#3a3a3a"/><rect x="7" y="0" width="2.6" height="20.7" fill="url(#pg2)"/><rect x="9.6" y="0.9" width="2.3" height="19.8" fill="#fff"/><rect x="11.9" y="0" width="1.3" height="20.7" fill="#3a3a3a"/><rect x="13.2" y="0" width="1.6" height="20.7" fill="#dedede"/></svg><svg style="left:1555.8000000000002px;top:1158.9px" width="13" height="18" viewBox="0 0 13 18" ><path d="M3.4 3 L9.4 9 L3.4 15" fill="none" stroke="#6e6e6e" stroke-width="3.1" stroke-linecap="round" stroke-linejoin="round"/></svg><svg style="left:1587.0px;top:1159.2px" width="16" height="22" viewBox="0 0 16 22" ><path d="M9 0 H4.6 Q0 0.2 0 5 V7 Q0.2 11.8 4.6 11.8 H9 Z" fill="url(#pg)"/><rect x="7" y="0" width="6.2" height="0.9" fill="#3a3a3a"/><rect x="7" y="0" width="2.6" height="20.7" fill="url(#pg2)"/><rect x="9.6" y="0.9" width="2.3" height="19.8" fill="#fff"/><rect x="11.9" y="0" width="1.3" height="20.7" fill="#3a3a3a"/><rect x="13.2" y="0" width="1.6" height="20.7" fill="#dedede"/></svg><svg style="left:1555.8000000000002px;top:1201.9px" width="13" height="18" viewBox="0 0 13 18" ><path d="M3.4 3 L9.4 9 L3.4 15" fill="none" stroke="#6e6e6e" stroke-width="3.1" stroke-linecap="round" stroke-linejoin="round"/></svg><svg style="left:1587.0px;top:1202.2px" width="16" height="22" viewBox="0 0 16 22" ><path d="M9 0 H4.6 Q0 0.2 0 5 V7 Q0.2 11.8 4.6 11.8 H9 Z" fill="url(#pg)"/><rect x="7" y="0" width="6.2" height="0.9" fill="#3a3a3a"/><rect x="7" y="0" width="2.6" height="20.7" fill="url(#pg2)"/><rect x="9.6" y="0.9" width="2.3" height="19.8" fill="#fff"/><rect x="11.9" y="0" width="1.3" height="20.7" fill="#3a3a3a"/><rect x="13.2" y="0" width="1.6" height="20.7" fill="#dedede"/></svg><svg style="left:1555.8000000000002px;top:1244.9px" width="13" height="18" viewBox="0 0 13 18" ><path d="M3.4 3 L9.4 9 L3.4 15" fill="none" stroke="#6e6e6e" stroke-width="3.1" stroke-linecap="round" stroke-linejoin="round"/></svg><svg style="left:1587.0px;top:1245.2px" width="16" height="22" viewBox="0 0 16 22" ><path d="M9 0 H4.6 Q0 0.2 0 5 V7 Q0.2 11.8 4.6 11.8 H9 Z" fill="url(#pg)"/><rect x="7" y="0" width="6.2" height="0.9" fill="#3a3a3a"/><rect x="7" y="0" width="2.6" height="20.7" fill="url(#pg2)"/><rect x="9.6" y="0.9" width="2.3" height="19.8" fill="#fff"/><rect x="11.9" y="0" width="1.3" height="20.7" fill="#3a3a3a"/><rect x="13.2" y="0" width="1.6" height="20.7" fill="#dedede"/></svg><svg style="left:1555.8000000000002px;top:1287.9px" width="13" height="18" viewBox="0 0 13 18" ><path d="M3.4 3 L9.4 9 L3.4 15" fill="none" stroke="#6e6e6e" stroke-width="3.1" stroke-linecap="round" stroke-linejoin="round"/></svg><svg style="left:1587.0px;top:1288.2px" width="16" height="22" viewBox="0 0 16 22" ><path d="M9 0 H4.6 Q0 0.2 0 5 V7 Q0.2 11.8 4.6 11.8 H9 Z" fill="url(#pg)"/><rect x="7" y="0" width="6.2" height="0.9" fill="#3a3a3a"/><rect x="7" y="0" width="2.6" height="20.7" fill="url(#pg2)"/><rect x="9.6" y="0.9" width="2.3" height="19.8" fill="#fff"/><rect x="11.9" y="0" width="1.3" height="20.7" fill="#3a3a3a"/><rect x="13.2" y="0" width="1.6" height="20.7" fill="#dedede"/></svg><svg style="left:1555.8000000000002px;top:1330.9px" width="13" height="18" viewBox="0 0 13 18" ><path d="M3.4 3 L9.4 9 L3.4 15" fill="none" stroke="#6e6e6e" stroke-width="3.1" stroke-linecap="round" stroke-linejoin="round"/></svg><svg style="left:1587.0px;top:1331.2px" width="16" height="22" viewBox="0 0 16 22" ><path d="M9 0 H4.6 Q0 0.2 0 5 V7 Q0.2 11.8 4.6 11.8 H9 Z" fill="url(#pg)"/><rect x="7" y="0" width="6.2" height="0.9" fill="#3a3a3a"/><rect x="7" y="0" width="2.6" height="20.7" fill="url(#pg2)"/><rect x="9.6" y="0.9" width="2.3" height="19.8" fill="#fff"/><rect x="11.9" y="0" width="1.3" height="20.7" fill="#3a3a3a"/><rect x="13.2" y="0" width="1.6" height="20.7" fill="#dedede"/></svg><div class="a" style="left:2056px;top:120px;width:2px;height:1250px;background:#d2d2d2"></div><svg style="left:2076px;top:140px" width="32" height="32" viewBox="0 0 32 32" ><g fill="none" stroke="#5a4fe6" stroke-width="2.3" stroke-linejoin="round" stroke-linecap="round"><path d="M16.6 7.4 H5.2 Q3 7.4 3 9.6 V24.9 Q3 27.1 5.2 27.1 H24 Q26.2 27.1 26.2 24.9 V16"/><path d="M7.6 11.4 H14 M7.6 16.6 H11.2 M7.6 22.2 H13.2" stroke-width="2.1"/></g><rect x="13.4" y="14.6" width="3.8" height="3.8" fill="#5a4fe6" transform="rotate(-12 15.3 16.5)"/><path d="M27.4 2.4 L26 7 L29.2 10.4 L24.6 10 L21.4 13.4 L21.2 8.8 L17.6 6.2 L22.2 5.8 Z" fill="#5a4fe6" stroke="#5a4fe6" stroke-width="1" stroke-linejoin="round"/></svg><div class="a" style="left:2077px;top:188px;width:31px;height:1px;background:#e1e1e1"></div><svg style="left:2076px;top:204px" width="32" height="30" viewBox="0 0 32 30" ><g fill="none" stroke="#222" stroke-width="2.5" stroke-linecap="round" stroke-linejoin="round"><path d="M17.6 4.2 A9.6 9.6 0 0 1 27.2 13.8 V22.2 H17.6 A9.6 9 0 0 1 17.6 4.2 Z"/><path d="M14.4 10.8 H21.6 M14.4 15.2 H19.6" stroke-width="2"/><path d="M5.6 9.6 Q2 16 5.6 22 Q9.6 27.4 22.4 26.2"/></g></svg><svg style="left:2076px;top:260px" width="32" height="32" viewBox="0 0 32 32" ><g fill="none" stroke="#222" stroke-width="2.5" stroke-linejoin="round" stroke-linecap="round"><path d="M3.6 4 H17.6 V27.6 L10.6 21.4 L3.6 27.6 Z"/><path d="M21.6 8.6 H28.6 M21.6 13 H28.6 M21.6 17.4 H28.6" stroke-width="2"/></g></svg><svg style="left:2076px;top:316px" width="32" height="32" viewBox="0 0 32 32" ><g fill="none" stroke="#222" stroke-width="2.5" stroke-linejoin="round" stroke-linecap="round"><path d="M11.8 8.2 H20.6 L26.4 14 V26.6 Q26.4 28.6 24.4 28.6 H13.8 Q11.8 28.6 11.8 26.6 Z"/><path d="M20.2 8.6 V14.4 H26"/><path d="M6 23.8 Q4.6 23.6 4.6 21.6 V6.2 Q4.6 4 6.8 4 H16.6"/></g></svg><svg style="left:2076px;top:372px" width="32" height="32" viewBox="0 0 32 32" ><g fill="none" stroke="#222" stroke-width="2.5" stroke-linejoin="round" stroke-linecap="round"><path d="M8 5.2 H19.6 L25.6 11.2 V25.6 Q25.6 27.8 23.4 27.8 H8 Q5.8 27.8 5.8 25.6 V7.4 Q5.8 5.2 8 5.2 Z"/><path d="M19.4 5.6 V11.4 H25.2"/><path d="M10.6 19.4 H17 M10.6 23.6 H17" stroke-width="2"/><path d="M10.6 15 H17" stroke="#8a8a8a" stroke-width="2"/></g></svg><div class="a" style="left:2068px;top:423px;width:48px;height:48px;border-radius:6px;background:#464646"></div><svg style="left:2076px;top:430px" width="32" height="32" viewBox="0 0 32 32" ><g fill="none" stroke="#fff" stroke-width="2.2" stroke-linejoin="round" stroke-linecap="round"><path d="M6.2 12.2 L14.8 4.6 L23.4 12.2 V26 Q23.4 27.8 21.6 27.8 H8 Q6.2 27.8 6.2 26 Z"/><path d="M10.6 18 H19 M10.6 22.6 H19" stroke-width="2.5"/></g><rect x="13.6" y="9.2" width="2.4" height="2.4" fill="#fff" transform="rotate(45 14.8 10.4)"/></svg><svg style="left:2076px;top:488px" width="32" height="32" viewBox="0 0 32 32" ><g fill="none" stroke="#222" stroke-width="2.5" stroke-linejoin="round" stroke-linecap="round"><path d="M7 6.4 V5.8 Q7 4.2 8.6 4.2 H16.6 L23.6 11.2 V14"/><path d="M16.2 4.6 V11.6 H23.2"/><path d="M7 16.6 V26.4 H14.6"/></g><rect x="2.4" y="7.6" width="9.6" height="6.6" rx="1.6" fill="#222"/><circle cx="22.2" cy="21.6" r="7" fill="#222"/><circle cx="22.2" cy="17.9" r="1.2" fill="#fff"/><path d="M20.4 20 H23 V24.4 H24.2 V25.6 H20.4 V24.4 H21.4 V21.2 H20.4 Z" fill="#fff"/></svg><svg style="left:2064px;top:951px" width="56" height="56" viewBox="0 0 56 56" ><rect x="4.6" y="5" width="47" height="46.4" rx="7" fill="#fff" stroke="#b0b0b0" stroke-width="1.3"/></svg><svg style="left:2082px;top:1074px" width="20" height="16" viewBox="0 0 20 16" ><path d="M4.4 11.2 L10.4 5.6 L16.4 11.2" fill="none" stroke="#8f8f8f" stroke-width="3" stroke-linecap="round" stroke-linejoin="round"/></svg><svg style="left:2082px;top:1124px" width="20" height="16" viewBox="0 0 20 16" ><path d="M4.4 5.8 L10.4 11.4 L16.4 5.8" fill="none" stroke="#222" stroke-width="3" stroke-linecap="round" stroke-linejoin="round"/></svg><div class="a" style="left:2068px;top:1158px;width:49px;height:1px;background:#e1e1e1"></div><svg style="left:2078px;top:1173px" width="30" height="30" viewBox="0 0 30 30" ><g fill="none" stroke="#222" stroke-width="2.4" stroke-linecap="round" stroke-linejoin="round"><path d="M23.6 18.6 A10.2 10.2 0 1 1 21.4 7.2"/><path d="M18.6 10.4 L25.2 10 L24.4 3.4"/></g></svg><svg style="left:2078px;top:1223px" width="34" height="38" viewBox="0 0 34 38" ><g fill="none" stroke="#222" stroke-width="2.5" stroke-linejoin="round" stroke-linecap="round"><path d="M7.4 4.4 H18.6 L24.4 10.2 V24.4 Q24.4 26.6 22.2 26.6 H7.4 Q5.2 26.6 5.2 24.4 V6.6 Q5.2 4.4 7.4 4.4 Z"/><path d="M18.4 4.8 V10.4 H24"/></g><path d="M33 27.6 V34.8 H25.8 Z" fill="#222"/></svg><svg style="left:2078px;top:1278px" width="30" height="30" viewBox="0 0 30 30" ><g fill="none" stroke="#222" stroke-width="2.7" stroke-linecap="round"><circle cx="13" cy="13" r="8.5"/><path d="M19.4 19.4 L26.2 26.2"/><path d="M9.4 13 H16.6 M13 9.4 V16.6" stroke-width="2.4"/></g></svg><svg style="left:2078px;top:1331px" width="30" height="30" viewBox="0 0 30 30" ><g fill="none" stroke="#222" stroke-width="2.7" stroke-linecap="round"><circle cx="13" cy="13" r="8.5"/><path d="M19.4 19.4 L26.2 26.2"/><path d="M9.4 13 H16.6" stroke-width="2.4"/></g></svg>
<div class="t" style="left:452.00px;top:303px;font-size:41.32px;line-height:46px;font-weight:700;color:#000;letter-spacing:0.000px;">NON-DISCLOSURE AGREEMENT</div><div class="t" style="left:224.90px;top:387px;font-size:27.61px;line-height:31px;font-weight:400;color:#000;letter-spacing:0.000px;word-spacing:0.082px;">This Non-Disclosure Agreement (“Agreement”) is made and entered into as of <b>[Date]</b></div><div class="t" style="left:224.90px;top:419px;font-size:27.61px;line-height:31px;font-weight:400;color:#000;letter-spacing:0.000px;word-spacing:-0.024px;">(“Effective Date”) by and between <b>[Disclosing Party Name]</b>, with its principal place of</div><div class="t" style="left:224.90px;top:451px;font-size:27.61px;line-height:31px;font-weight:400;color:#000;letter-spacing:0.000px;word-spacing:-0.329px;">business at <b>[Disclosing Party Address]</b> (“Disclosing Party”), and <b>[Receiving Party</b></div><div class="t" style="left:224.90px;top:483px;font-size:27.61px;line-height:31px;font-weight:400;color:#000;letter-spacing:0.000px;word-spacing:-0.220px;"><b>Name]</b>, with its principal place of business at <b>[Receiving Party Address]</b> (“Receiving</div><div class="t" style="left:224.90px;top:515px;font-size:27.61px;line-height:31px;font-weight:400;color:#000;letter-spacing:0.000px;">Party”).</div><div class="t" style="left:224.90px;top:547px;font-size:27.61px;line-height:31px;font-weight:400;color:#000;letter-spacing:0.000px;word-spacing:-0.226px;">Disclosing Party and Receiving Party are collectively referred to as the “Parties” and</div><div class="t" style="left:224.90px;top:579px;font-size:27.61px;line-height:31px;font-weight:400;color:#000;letter-spacing:0.000px;word-spacing:-0.700px;">individually as a “Party”.</div><div class="t" style="left:224.90px;top:673px;font-size:27.61px;line-height:31px;font-weight:400;color:#000;letter-spacing:0.000px;word-spacing:0.196px;">For purposes of this Agreement, “Confidential Information” means any non-public,</div><div class="t" style="left:224.90px;top:703px;font-size:27.61px;line-height:31px;font-weight:400;color:#000;letter-spacing:0.000px;word-spacing:0.085px;">proprietary, or confidential information disclosed by the Disclosing Party to the Receiving</div><div class="t" style="left:224.90px;top:735px;font-size:27.61px;line-height:31px;font-weight:400;color:#000;letter-spacing:0.000px;word-spacing:-0.046px;">Party, whether orally or in writing, including but not limited to business plans, financial</div><div class="t" style="left:224.90px;top:767px;font-size:27.61px;line-height:31px;font-weight:400;color:#000;letter-spacing:0.000px;word-spacing:-0.011px;">information, technical data, software, customer information, and trade secrets.</div><div class="t" style="left:224.90px;top:861px;font-size:27.61px;line-height:31px;font-weight:400;color:#000;letter-spacing:0.000px;word-spacing:-0.424px;">The Receiving Party agrees to:</div><div class="t" style="left:266.65px;top:893px;font-size:27.61px;line-height:31px;font-weight:400;color:#000;letter-spacing:0.000px;word-spacing:0.008px;">Use the Confidential Information solely for the purpose of <b>[Purpose, e.g. “evaluating</b></div><div class="t" style="left:266.65px;top:925px;font-size:27.61px;line-height:31px;font-weight:400;color:#000;letter-spacing:0.000px;word-spacing:-0.700px;"><b>a potential business relationship”]</b>.</div><div class="t" style="left:266.65px;top:957px;font-size:27.61px;line-height:31px;font-weight:400;color:#000;letter-spacing:0.000px;word-spacing:-0.014px;">Keep the Confidential Information strictly confidential and not disclose it to any third</div><div class="t" style="left:266.65px;top:989px;font-size:27.61px;line-height:31px;font-weight:400;color:#000;letter-spacing:0.000px;word-spacing:0.111px;">party, except to employees or contractors who have a need to know and are bound by</div><div class="t" style="left:266.65px;top:1020px;font-size:27.61px;line-height:31px;font-weight:400;color:#000;letter-spacing:0.000px;word-spacing:-0.700px;">similar confidentiality obligations.</div><div class="t" style="left:266.65px;top:1052px;font-size:27.61px;line-height:31px;font-weight:400;color:#000;letter-spacing:0.000px;word-spacing:0.066px;">Protect the Confidential Information with at least the same degree of care that it uses</div><div class="t" style="left:266.65px;top:1083px;font-size:27.61px;line-height:31px;font-weight:400;color:#000;letter-spacing:0.000px;word-spacing:0.001px;">to protect its own confidential information, and in no event with less than reasonable</div><div class="t" style="left:266.65px;top:1115px;font-size:27.61px;line-height:31px;font-weight:400;color:#000;letter-spacing:0.000px;">care.</div><div class="t" style="left:224.90px;top:1224px;font-size:27.61px;line-height:31px;font-weight:400;color:#000;letter-spacing:0.000px;">The obligations in this Agreement do not apply to information that:</div><div class="t" style="left:266.65px;top:1271px;font-size:27.61px;line-height:31px;font-weight:400;color:#000;letter-spacing:0.000px;word-spacing:-0.133px;">Is or becomes publicly available through no fault of the Receiving Party;</div><div class="t" style="left:266.65px;top:1303px;font-size:27.61px;line-height:31px;font-weight:400;color:#000;letter-spacing:0.000px;word-spacing:-0.159px;">Was lawfully known to the Receiving Party before disclosure by the Disclosing Party;</div><div class="t" style="left:266.65px;top:1336px;font-size:27.61px;line-height:31px;font-weight:400;color:#000;letter-spacing:0.000px;">Is received from a third party without breach of any obligation of confidentiality;</div><div class="t" style="left:237.10px;top:896px;font-size:25px;line-height:28px;font-weight:400;color:#000;letter-spacing:0.000px;">•</div><div class="t" style="left:237.10px;top:960px;font-size:25px;line-height:28px;font-weight:400;color:#000;letter-spacing:0.000px;">•</div><div class="t" style="left:237.10px;top:1055px;font-size:25px;line-height:28px;font-weight:400;color:#000;letter-spacing:0.000px;">•</div><div class="t" style="left:237.10px;top:1274px;font-size:25px;line-height:28px;font-weight:400;color:#000;letter-spacing:0.000px;">•</div><div class="t" style="left:237.10px;top:1306px;font-size:25px;line-height:28px;font-weight:400;color:#000;letter-spacing:0.000px;">•</div><div class="t" style="left:237.10px;top:1339px;font-size:25px;line-height:28px;font-weight:400;color:#000;letter-spacing:0.000px;">•</div><div class="t" style="left:224.90px;top:644px;font-size:25.35px;line-height:28px;font-weight:700;color:#000;letter-spacing:0.000px;">1. DEFINITION OF CONFIDENTIAL INFORMATION</div><div class="t" style="left:224.90px;top:832px;font-size:25.35px;line-height:28px;font-weight:700;color:#000;letter-spacing:0.000px;">2. OBLIGATIONS OF THE RECEIVING PARTY</div><div class="t" style="left:224.90px;top:1180px;font-size:25.35px;line-height:28px;font-weight:700;color:#000;letter-spacing:0.000px;">3. EXCLUSIONS</div><div class="t" style="left:55.25px;top:15px;font-size:16.9px;line-height:19px;font-weight:400;color:#222;letter-spacing:0.000px;transform:scaleX(1.0475);transform-origin:0 0;">Menu</div><div class="t" style="left:232.41px;top:16px;font-size:18.9px;line-height:21px;font-weight:400;color:#000;letter-spacing:0.000px;transform:scaleX(0.9917);transform-origin:0 0;">Non-Disclosure Agree...</div><div class="t" style="left:545.10px;top:15px;font-size:16.9px;line-height:19px;font-weight:400;color:#222;letter-spacing:0.000px;transform:scaleX(0.9383);transform-origin:0 0;">Create</div><div class="t" style="left:69.70px;top:75px;font-size:19.8px;line-height:22px;font-weight:400;color:#111;letter-spacing:0.000px;transform:scaleX(0.9012);transform-origin:0 0;">Try PDF Spaces</div><div class="t" style="left:269.90px;top:75px;font-size:19.8px;line-height:22px;font-weight:400;color:#111;letter-spacing:0.000px;transform:scaleX(0.9744);transform-origin:0 0;">All tools</div><div class="t" style="left:373.43px;top:75px;font-size:19.8px;line-height:22px;font-weight:400;color:#111;letter-spacing:0.000px;transform:scaleX(0.9705);transform-origin:0 0;">Edit</div><div class="t" style="left:442.11px;top:75px;font-size:19.8px;line-height:22px;font-weight:400;color:#111;letter-spacing:0.000px;transform:scaleX(0.9888);transform-origin:0 0;">Convert</div><div class="t" style="left:547.19px;top:75px;font-size:19.8px;line-height:22px;font-weight:400;color:#111;letter-spacing:0.000px;transform:scaleX(0.9116);transform-origin:0 0;">E-Sign</div><div class="t" style="left:1244.40px;top:75px;font-size:19.2px;line-height:21px;font-weight:400;color:#111;letter-spacing:0.000px;transform:scaleX(0.9972);transform-origin:0 0;">Find text, tools, or help</div><div class="t" style="left:1805.00px;top:75px;font-size:19.2px;line-height:21px;font-weight:700;color:#fff;letter-spacing:0.000px;transform:scaleX(0.9207);transform-origin:0 0;">Share</div><div class="t" style="left:1950.00px;top:75px;font-size:19.2px;line-height:21px;font-weight:700;color:#fff;letter-spacing:0.000px;transform:scaleX(0.9143);transform-origin:0 0;">Ask AI Assistant</div><div class="t" style="left:1716.50px;top:17px;font-size:15.5px;line-height:17px;font-weight:700;color:#222;letter-spacing:0.000px;">?</div><div class="t" style="left:39.90px;top:416px;font-size:16.6px;line-height:19px;font-weight:700;color:#222;letter-spacing:0.000px;">A</div><div class="t" style="left:1553.00px;top:146px;font-size:23.4px;line-height:26px;font-weight:700;color:#111;letter-spacing:0.000px;transform:scaleX(0.8623);transform-origin:0 0;">Accessibility tags</div><div class="t" style="left:1541.00px;top:209px;font-size:16.6px;line-height:19px;font-weight:400;color:#111;letter-spacing:0.000px;transform:scaleX(0.9438);transform-origin:0 0;">Tags</div><div class="t" style="left:1565.90px;top:252px;font-size:16.6px;line-height:19px;font-weight:400;color:#111;letter-spacing:0.000px;transform:scaleX(1.0199);transform-origin:0 0;">&lt;Document&gt;</div><div class="t" style="left:1589.90px;top:295px;font-size:16.6px;line-height:19px;font-weight:400;color:#111;letter-spacing:0.000px;transform:scaleX(1.0056);transform-origin:0 0;">&lt;Part&gt;</div><div class="t" style="left:1613.90px;top:338px;font-size:16.6px;line-height:19px;font-weight:400;color:#111;letter-spacing:0.000px;transform:scaleX(0.9476);transform-origin:0 0;">&lt;P&gt;</div><div class="t" style="left:1613.90px;top:381px;font-size:16.6px;line-height:19px;font-weight:400;color:#111;letter-spacing:0.000px;transform:scaleX(0.9476);transform-origin:0 0;">&lt;P&gt;</div><div class="t" style="left:1613.90px;top:424px;font-size:16.6px;line-height:19px;font-weight:400;color:#111;letter-spacing:0.000px;transform:scaleX(0.9476);transform-origin:0 0;">&lt;P&gt;</div><div class="t" style="left:1613.90px;top:467px;font-size:16.6px;line-height:19px;font-weight:400;color:#111;letter-spacing:0.000px;transform:scaleX(0.9476);transform-origin:0 0;">&lt;P&gt;</div><div class="t" style="left:1613.90px;top:510px;font-size:16.6px;line-height:19px;font-weight:400;color:#111;letter-spacing:0.000px;transform:scaleX(0.9476);transform-origin:0 0;">&lt;P&gt;</div><div class="t" style="left:1613.90px;top:553px;font-size:16.6px;line-height:19px;font-weight:400;color:#111;letter-spacing:0.000px;transform:scaleX(0.9476);transform-origin:0 0;">&lt;P&gt;</div><div class="t" style="left:1613.90px;top:596px;font-size:16.6px;line-height:19px;font-weight:400;color:#111;letter-spacing:0.000px;transform:scaleX(0.9476);transform-origin:0 0;">&lt;P&gt;</div><div class="t" style="left:1613.90px;top:639px;font-size:16.6px;line-height:19px;font-weight:400;color:#111;letter-spacing:0.000px;transform:scaleX(0.9742);transform-origin:0 0;">&lt;L&gt;</div><div class="t" style="left:1637.90px;top:682px;font-size:16.6px;line-height:19px;font-weight:400;color:#111;letter-spacing:0.000px;transform:scaleX(0.9714);transform-origin:0 0;">&lt;LI&gt;</div><div class="t" style="left:1661.90px;top:725px;font-size:16.6px;line-height:19px;font-weight:400;color:#111;letter-spacing:0.000px;transform:scaleX(1.0016);transform-origin:0 0;">&lt;Lbl&gt;</div><div class="t" style="left:1661.90px;top:768px;font-size:16.6px;line-height:19px;font-weight:400;color:#111;letter-spacing:0.000px;transform:scaleX(0.9659);transform-origin:0 0;">&lt;LBody&gt;</div><div class="t" style="left:1685.90px;top:854px;font-size:16.6px;line-height:19px;font-weight:400;color:#111;letter-spacing:0.000px;transform:scaleX(0.9714);transform-origin:0 0;">&lt;LI&gt;</div><div class="t" style="left:1637.90px;top:897px;font-size:16.6px;line-height:19px;font-weight:400;color:#111;letter-spacing:0.000px;transform:scaleX(0.9714);transform-origin:0 0;">&lt;LI&gt;</div><div class="t" style="left:1637.90px;top:940px;font-size:16.6px;line-height:19px;font-weight:400;color:#111;letter-spacing:0.000px;transform:scaleX(0.9714);transform-origin:0 0;">&lt;LI&gt;</div><div class="t" style="left:1613.90px;top:983px;font-size:16.6px;line-height:19px;font-weight:400;color:#111;letter-spacing:0.000px;transform:scaleX(0.9476);transform-origin:0 0;">&lt;P&gt;</div><div class="t" style="left:1613.90px;top:1026px;font-size:16.6px;line-height:19px;font-weight:400;color:#111;letter-spacing:0.000px;transform:scaleX(0.9476);transform-origin:0 0;">&lt;P&gt;</div><div class="t" style="left:1613.90px;top:1069px;font-size:16.6px;line-height:19px;font-weight:400;color:#111;letter-spacing:0.000px;transform:scaleX(0.9742);transform-origin:0 0;">&lt;L&gt;</div><div class="t" style="left:1613.90px;top:1112px;font-size:16.6px;line-height:19px;font-weight:400;color:#111;letter-spacing:0.000px;transform:scaleX(0.9476);transform-origin:0 0;">&lt;P&gt;</div><div class="t" style="left:1613.90px;top:1155px;font-size:16.6px;line-height:19px;font-weight:400;color:#111;letter-spacing:0.000px;transform:scaleX(0.9476);transform-origin:0 0;">&lt;P&gt;</div><div class="t" style="left:1613.90px;top:1198px;font-size:16.6px;line-height:19px;font-weight:400;color:#111;letter-spacing:0.000px;transform:scaleX(0.9476);transform-origin:0 0;">&lt;P&gt;</div><div class="t" style="left:1613.90px;top:1241px;font-size:16.6px;line-height:19px;font-weight:400;color:#111;letter-spacing:0.000px;transform:scaleX(0.9476);transform-origin:0 0;">&lt;P&gt;</div><div class="t" style="left:1613.90px;top:1284px;font-size:16.6px;line-height:19px;font-weight:400;color:#111;letter-spacing:0.000px;transform:scaleX(0.9476);transform-origin:0 0;">&lt;P&gt;</div><div class="t" style="left:1613.90px;top:1327px;font-size:16.6px;line-height:19px;font-weight:400;color:#111;letter-spacing:0.000px;transform:scaleX(0.9476);transform-origin:0 0;">&lt;P&gt;</div><div class="t" style="left:2087.00px;top:969px;font-size:17.2px;line-height:20px;font-weight:400;color:#111;letter-spacing:0.000px;">1</div><div class="t" style="left:2087.20px;top:1020px;font-size:17.2px;line-height:20px;font-weight:400;color:#111;letter-spacing:0.000px;">2</div><div class="t" style="left:2085.20px;top:1237px;font-size:11.2px;line-height:12px;font-weight:700;color:#222;letter-spacing:0.000px;letter-spacing:-0.3px">1:1</div>
<div class="a" style="left:95px;top:1346px;width:1335px;height:24px;background:#f0f0f0"></div><div class="a" style="left:1430px;top:1345px;width:26px;height:25px;background:#fafafa"></div><div class="a" style="left:95px;top:1346px;width:155px;height:24px;background:#e3e3e3"></div><div class="a" style="left:276px;top:1356px;width:1104px;height:5.4px;background:#808080;border-radius:3px"></div><div class="t" style="left:124.6px;top:1351px;font-size:15px;line-height:17px;color:#111;letter-spacing:-0.1px">8.27 x 11.69 in</div><div class="a" style="left:1472px;top:1343px;width:556px;height:27px;background:#fff"></div><div class="a" style="left:1472px;top:1343px;width:556px;height:25px;background:#f0f0f0"></div><div class="a" style="left:1498px;top:1353px;width:475px;height:5.4px;background:#808080;border-radius:3px"></div><div class="a" style="left:2028px;top:1342px;width:28px;height:28px;background:#fff"></div><div class="a" style="left:2028px;top:1342px;width:25px;height:26px;background:#fafafa"></div><svg style="left:0;top:0" width="2127" height="1370" viewBox="0 0 2127 1370"><path d="M2127 1361.5 Q2126 1369 2118.5 1370 H2127 Z" fill="#bdbdbd"/><path d="M0 6.5 Q0.8 0.8 6.5 0 H0 Z" fill="#cfcfcf"/></svg>
</body></html>
